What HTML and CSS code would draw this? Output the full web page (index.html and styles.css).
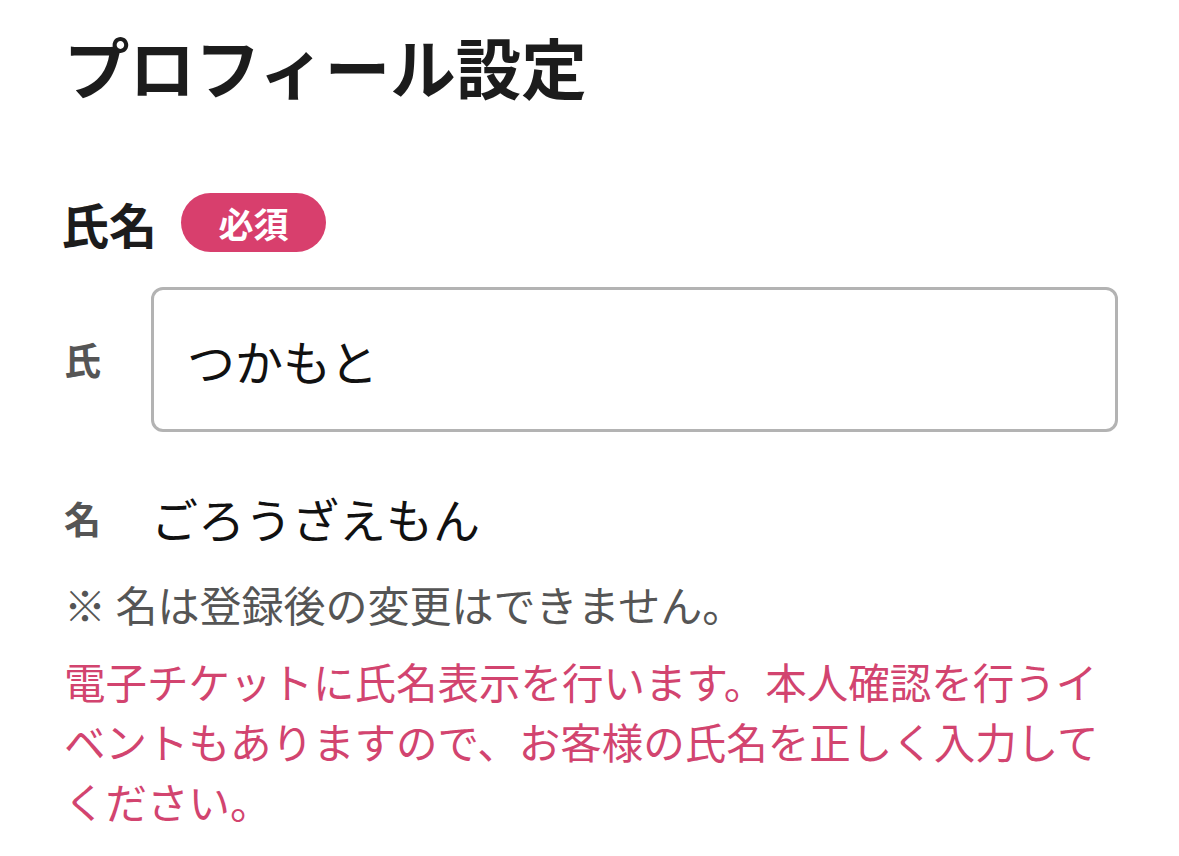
FILE: index.html
```html
<!DOCTYPE html>
<html lang="ja">
<head>
<meta charset="utf-8">
<title>プロフィール設定</title>
<link rel="stylesheet" href="styles.css">
</head>
<body>
<main class="page">
  <h1 class="title">プロフィール設定</h1>
  <div class="field-head">
    <span class="field-label">氏名</span>
    <span class="badge">必須</span>
  </div>
  <div class="row">
    <span class="row-label">氏</span>
    <div class="input">つかもと</div>
  </div>
  <div class="row row-static">
    <span class="row-label">名</span>
    <span class="value">ごろうざえもん</span>
  </div>
  <p class="note">※ 名は登録後の変更はできません。</p>
  <p class="warn">電子チケットに氏名表示を行います。本人確認を行うイベントもありますので、お客様の氏名を正しく入力してください。</p>
</main>
</body>
</html>
```
FILE: styles.css
```css
html, body {
  margin: 0;
  padding: 0;
  background: #ffffff;
}
body {
  font-family: "Noto Sans CJK JP", "Noto Sans", sans-serif;
  color: #1a1a1a;
}
.page {
  padding: 0 61px 0 64px;
}
.title {
  margin: 0;
  padding-top: 27px;
  font-size: 65.5px;
  line-height: 78px;
  font-weight: 700;
  color: #1c1c1c;
}
.field-head {
  margin-top: 88px;
  display: flex;
  align-items: center;
  gap: 24px;
  height: 59px;
}
.field-label {
  margin-left: -3px;
  font-size: 48px;
  font-weight: 700;
  line-height: 1;
  color: #1c1c1c;
}
.badge {
  display: flex;
  align-items: center;
  justify-content: center;
  width: 145px;
  height: 59px;
  border-radius: 30px;
  background: #d83f6d;
  color: #ffffff;
  font-size: 35px;
  font-weight: 700;
  line-height: 1;
}
.row {
  margin-top: 35px;
  display: flex;
  align-items: center;
}
.row-label {
  width: 87px;
  flex: none;
  font-size: 37px;
  font-weight: 700;
  color: #555555;
  line-height: 1;
}
.input {
  flex: 1;
  box-sizing: border-box;
  height: 145px;
  border: 3px solid #b3b3b3;
  border-radius: 12px;
  padding-left: 33px;
  display: flex;
  align-items: center;
  font-size: 48px;
  color: #111111;
}
.row-static {
  margin-top: 56px;
  height: 60px;
}
.value {
  font-size: 47px;
  line-height: 60px;
  color: #111111;
}
.note {
  margin: 27px 0 0;
  font-size: 42px;
  line-height: 58px;
  color: #555555;
}
.warn {
  margin: 18px 0 0;
  font-size: 41.5px;
  line-height: 60px;
  color: #d2446f;
}
```
